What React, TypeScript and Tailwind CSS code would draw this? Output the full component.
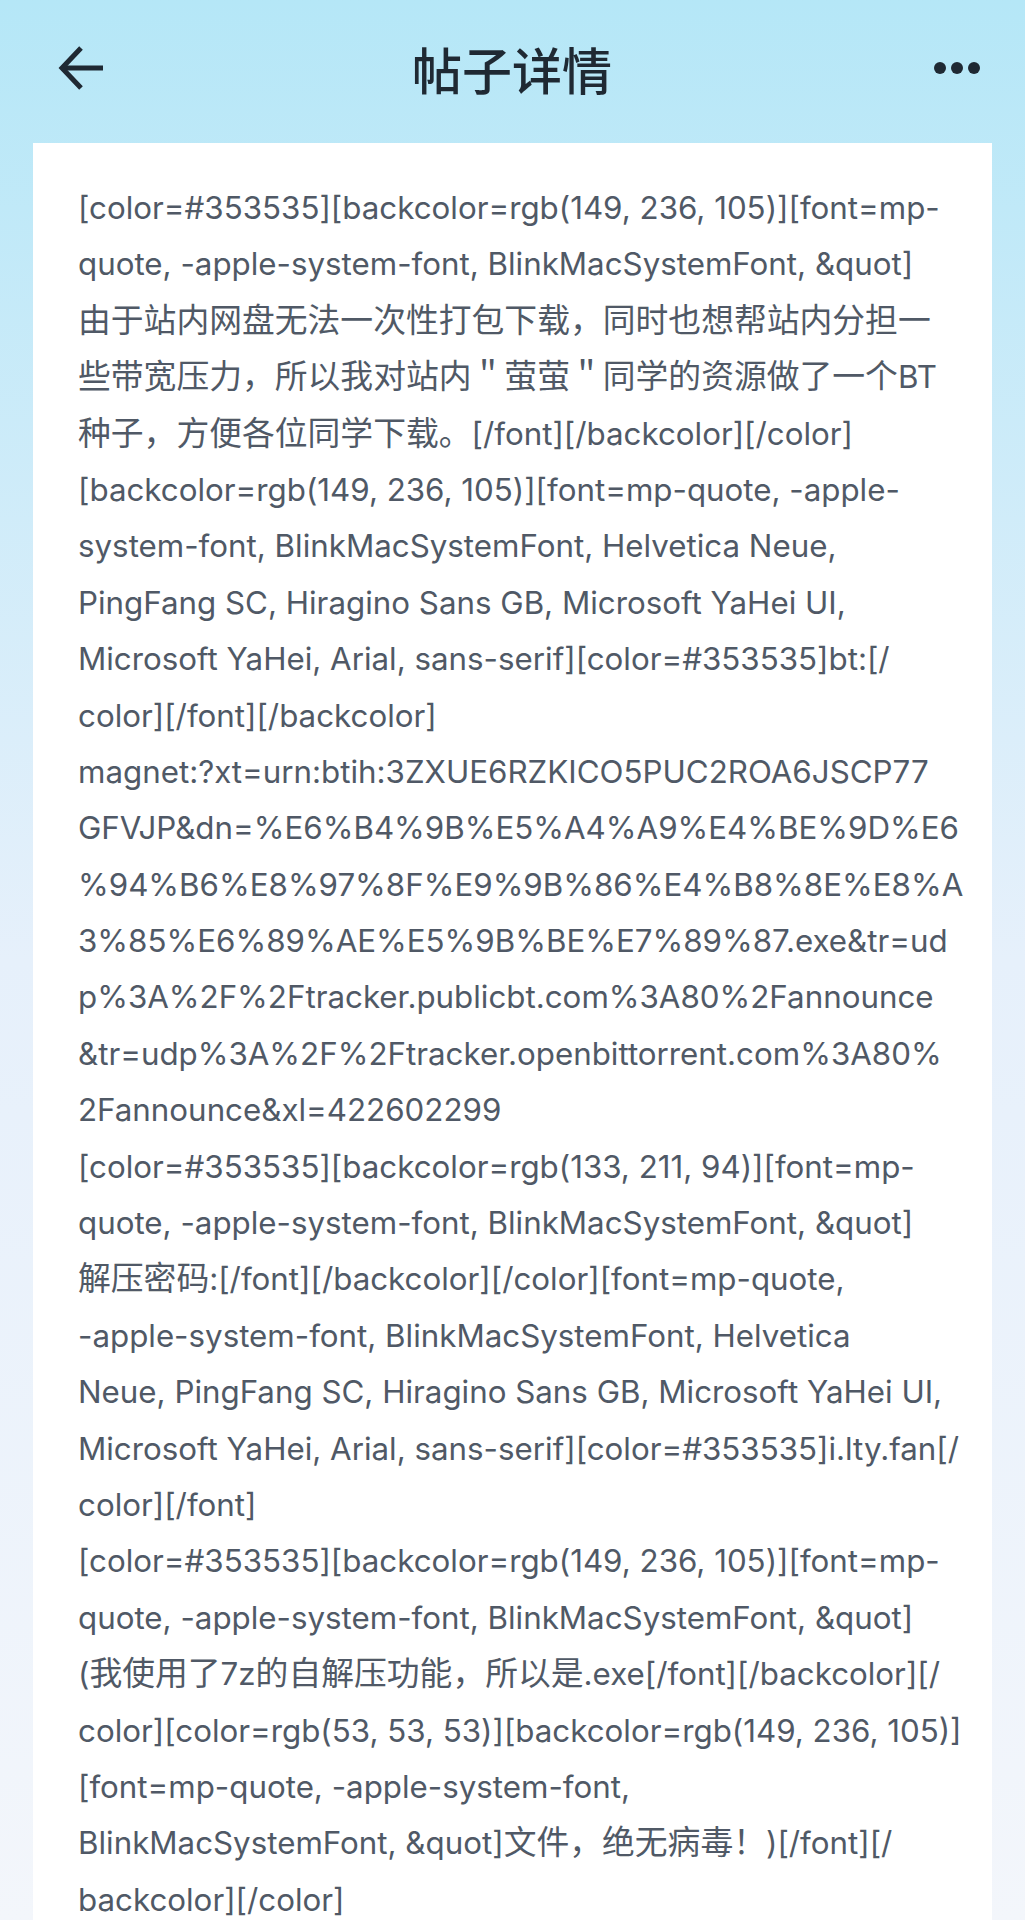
// Post detail screen: a header bar over a white card that holds the raw post body.
// The body is kept line by line so it breaks exactly where the screenshot does.

const LINES: string[] = [
  "[color=#353535][backcolor=rgb(149, 236, 105)][font=mp-",
  "quote, -apple-system-font, BlinkMacSystemFont, &quot]",
  "由于站内网盘无法一次性打包下载，同时也想帮站内分担一",
  "些带宽压力，所以我对站内＂萤萤＂同学的资源做了一个BT",
  "种子，方便各位同学下载。[/font][/backcolor][/color]",
  "[backcolor=rgb(149, 236, 105)][font=mp-quote, -apple-",
  "system-font, BlinkMacSystemFont, Helvetica Neue,",
  "PingFang SC, Hiragino Sans GB, Microsoft YaHei UI,",
  "Microsoft YaHei, Arial, sans-serif][color=#353535]bt:[/",
  "color][/font][/backcolor]",
  "magnet:?xt=urn:btih:3ZXUE6RZKICO5PUC2ROA6JSCP77",
  "GFVJP&dn=%E6%B4%9B%E5%A4%A9%E4%BE%9D%E6",
  "%94%B6%E8%97%8F%E9%9B%86%E4%B8%8E%E8%A",
  "3%85%E6%89%AE%E5%9B%BE%E7%89%87.exe&tr=ud",
  "p%3A%2F%2Ftracker.publicbt.com%3A80%2Fannounce",
  "&tr=udp%3A%2F%2Ftracker.openbittorrent.com%3A80%",
  "2Fannounce&xl=422602299",
  "[color=#353535][backcolor=rgb(133, 211, 94)][font=mp-",
  "quote, -apple-system-font, BlinkMacSystemFont, &quot]",
  "解压密码:[/font][/backcolor][/color][font=mp-quote,",
  "-apple-system-font, BlinkMacSystemFont, Helvetica",
  "Neue, PingFang SC, Hiragino Sans GB, Microsoft YaHei UI,",
  "Microsoft YaHei, Arial, sans-serif][color=#353535]i.lty.fan[/",
  "color][/font]",
  "[color=#353535][backcolor=rgb(149, 236, 105)][font=mp-",
  "quote, -apple-system-font, BlinkMacSystemFont, &quot]",
  "(我使用了7z的自解压功能，所以是.exe[/font][/backcolor][/",
  "color][color=rgb(53, 53, 53)][backcolor=rgb(149, 236, 105)]",
  "[font=mp-quote, -apple-system-font,",
  "BlinkMacSystemFont, &quot]文件，绝无病毒！)[/font][/",
  "backcolor][/color]",
];

// CJK ideographs and full-width punctuation
const CJK = /([\u3000-\u303f\u4e00-\u9fff\uff00-\uffef]+)/;

function BodyLine({ text }: { text: string }) {
  return (
    <p className="h-[56.4px] whitespace-nowrap">
      {text.split(CJK).map((part, i) =>
        i % 2 === 1 ? (
          <span key={i} className="text-[32.8px] leading-none">
            {part}
          </span>
        ) : (
          part
        ),
      )}
    </p>
  );
}

function BackArrow() {
  return (
    <svg width="48" height="48" viewBox="0 0 48 48" fill="none" stroke="#1f2933" strokeWidth="5">
      <path d="M46 24H5" />
      <path d="M24 4L5 24l19 20" strokeLinejoin="miter" />
    </svg>
  );
}

function MoreDots() {
  return (
    <svg width="48" height="14" viewBox="0 0 48 14" fill="#1f2933">
      <circle cx="7" cy="7" r="6" />
      <circle cx="24" cy="7" r="6" />
      <circle cx="41" cy="7" r="6" />
    </svg>
  );
}

export default function App() {
  return (
    <div className="flex h-[1920px] w-full flex-col overflow-hidden bg-gradient-to-b from-[#b5e7f7] via-[#e6f0fb] to-[#f3f6fb] font-['Inter','Noto_Sans_CJK_SC',sans-serif]">
      <header className="flex h-[143px] shrink-0 items-center justify-between pb-[8px] pl-[57px] pr-[44px]">
        <BackArrow />
        <h1 className="mr-[14px] font-['Noto_Sans_CJK_SC',sans-serif] text-[50px] font-medium leading-none text-[#1f2933]">
          帖子详情
        </h1>
        <MoreDots />
      </header>

      <main className="mx-[33px] flex-1 bg-white pl-[45px] pt-[37px] text-[31.3px] leading-[56.4px] text-[#505966]">
        {LINES.map((line, i) => (
          <BodyLine key={i} text={line} />
        ))}
      </main>
    </div>
  );
}
